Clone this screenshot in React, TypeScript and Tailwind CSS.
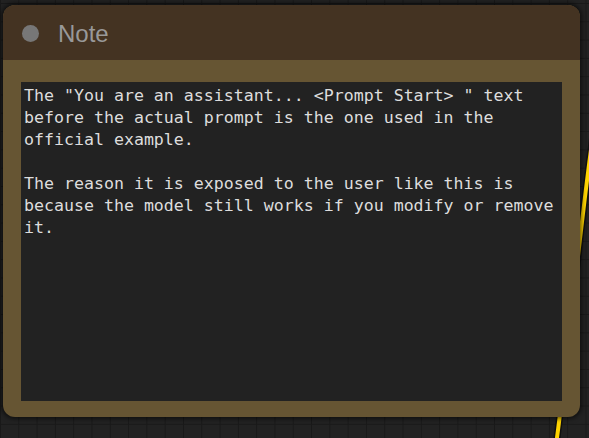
import React from "react";

export default function App() {
  return (
    <div className="relative w-[589px] h-[438px] overflow-hidden bg-[#222222] bg-[linear-gradient(to_right,#191919_1px,transparent_1px),linear-gradient(to_bottom,#191919_1px,transparent_1px)] bg-[size:18.3px_18.3px] bg-[position:0px_3px]">
      <svg className="absolute left-0 top-0" width="589" height="438" viewBox="0 0 589 438">
        <path d="M 600 90 C 585 170, 568 360, 556 445" fill="none" stroke="#111" strokeWidth="7" />
        <path d="M 600 90 C 585 170, 568 360, 556 445" fill="none" stroke="#ffd400" strokeWidth="4" />
      </svg>
      <div className="absolute left-[3px] top-[5px] w-[577px] h-[412px] rounded-[12px] bg-[#665533] shadow-[0_0_4px_2px_rgba(0,0,0,0.55)] flex flex-col overflow-hidden">
        <div className="h-[55px] bg-[#443322] flex items-center pl-[19px] gap-[19px] shrink-0">
          <div className="w-[17px] h-[17px] rounded-full bg-[#777777] mt-[1px]" />
          <span className="text-[#999999] text-[24px] leading-none font-['Liberation_Sans',Arial,sans-serif] mt-[2px]">Note</span>
        </div>
        <div className="flex-1 pt-[22px] pl-[18px] pr-[18px] pb-[16px] flex">
          <div className="flex-1 bg-[#222222] text-[#dddddd] font-['DejaVu_Sans_Mono',monospace] text-[16.6px] leading-[22px] whitespace-pre-wrap px-[3px] pt-[3px]">
            {"The \"You are an assistant... <Prompt Start> \" text before the actual prompt is the one used in the official example.\n\nThe reason it is exposed to the user like this is because the model still works if you modify or remove it."}
          </div>
        </div>
      </div>
    </div>
  );
}
